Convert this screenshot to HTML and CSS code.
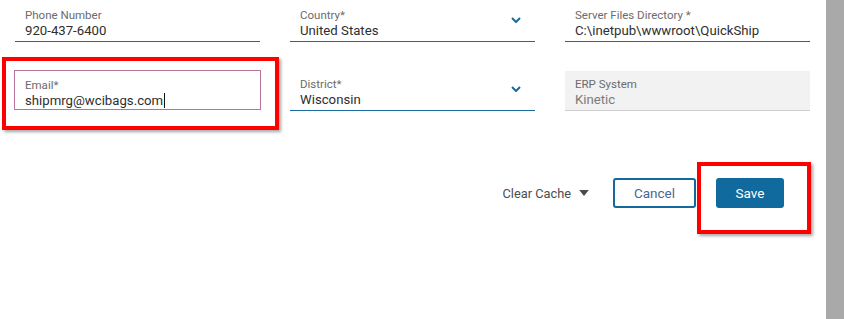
FILE: index.html
```html
<!DOCTYPE html>
<html lang="en">
  <head>
    <meta charset="UTF-8" />
    <meta name="viewport" content="width=device-width, initial-scale=1.0" />
    <title>Company Settings</title>
    <link rel="stylesheet" href="styles.css">
  </head>
  <body>
    <main class="panel">
      <div class="form-grid">
        <div class="field">
          <span class="field-label">Phone Number</span>
          <span class="field-value">920-437-6400</span>
        </div>

        <div class="field select">
          <span class="field-label">Country*</span>
          <span class="field-value">United States</span>
          <svg class="chevron" viewBox="0 0 10 6">
            <polyline points="1 1 5 5 9 1"></polyline>
          </svg>
        </div>

        <div class="field">
          <span class="field-label">Server Files Directory *</span>
          <span class="field-value">C:\inetpub\wwwroot\QuickShip</span>
        </div>

        <div class="field focused">
          <span class="field-label">Email*</span>
          <span class="field-value">shipmrg@wcibags.com<span class="caret"></span></span>
        </div>

        <div class="field select">
          <span class="field-label">District*</span>
          <span class="field-value">Wisconsin</span>
          <svg class="chevron" viewBox="0 0 10 6">
            <polyline points="1 1 5 5 9 1"></polyline>
          </svg>
        </div>

        <div class="field readonly">
          <span class="field-label">ERP System</span>
          <span class="field-value">Kinetic</span>
        </div>
      </div>

      <div class="actions">
        <button class="btn-link" type="button">
          Clear Cache
          <svg class="caret-down" viewBox="0 0 8 5">
            <polygon points="0 0 8 0 4 5"></polygon>
          </svg>
        </button>
        <button class="btn btn-outline" type="button">Cancel</button>
        <button class="btn btn-primary" type="button">Save</button>
      </div>

      <!-- annotation boxes drawn over the screenshot -->
      <div class="highlight highlight-email"></div>
      <div class="highlight highlight-save"></div>
    </main>

    <aside class="scrollbar"></aside>
  </body>
</html>
```

FILE: styles.css
```css
/* Page frame */
body {
  margin: 0;
  display: flex;
  height: 100vh;
  overflow: hidden;
  background: #ffffff;
  font-family: "Roboto", "Liberation Sans", sans-serif;
  color: #333333;
}

.panel {
  flex: 1;
  position: relative;
  padding: 2px 0 0 15px;
}

.scrollbar {
  width: 18px;
  background: #a9a9a9;
}

/* --- Form fields --- */

.form-grid {
  display: grid;
  grid-template-columns: repeat(3, 245px);
  column-gap: 30px;
  row-gap: 29px;
}

.field {
  --accent: #1a6b9b;
  position: relative;
  box-sizing: border-box;
  height: 40px;
  padding: 6px 10px 0;
  border-bottom: 1px solid var(--accent);
  display: flex;
  flex-direction: column;
}

.field-label {
  font-size: 11.5px;
  line-height: 15px;
  color: #6b6b6b;
}

.field-value {
  font-size: 13.2px;
  line-height: 16px;
  color: #2e2e2e;
  white-space: nowrap;
}

/* Focused email input */
.field.focused {
  margin: -1px -1px 0;
  height: 40px;
  border: 1px solid #b8739d;
  padding: 7px 10px 0;
}

.caret {
  display: inline-block;
  width: 1px;
  height: 15px;
  margin-left: 1px;
  vertical-align: -3px;
  background: #111111;
}

/* Select fields */
.field.select .chevron {
  position: absolute;
  right: 14px;
  top: 15px;
  width: 10px;
  height: 6px;
  fill: none;
  stroke: var(--accent);
  stroke-width: 2px;
}

/* Read only field */
.field.readonly {
  background: #f2f2f2;
  border-bottom-color: #cfcfcf;
}

.field.readonly .field-value {
  color: #7a7a7a;
}

/* --- Buttons row --- */

.actions {
  display: flex;
  justify-content: flex-end;
  align-items: center;
  gap: 20px;
  width: 769px;
  margin-top: 67px;
}

.btn-link {
  display: flex;
  align-items: center;
  gap: 8px;
  margin-right: 4px;
  padding: 0;
  border: none;
  background: none;
  font: inherit;
  font-size: 12.8px;
  color: #4d4d4d;
}

.caret-down {
  width: 10px;
  height: 6px;
  fill: #4a4a4a;
}

.btn {
  box-sizing: border-box;
  height: 30px;
  border-radius: 3px;
  font: inherit;
  font-size: 13.5px;
}

.btn-outline {
  width: 83px;
  border: 2px solid #13699c;
  background: #ffffff;
  color: #4a6890;
}

.btn-primary {
  width: 68px;
  border: none;
  background: #116a9d;
  color: #ffffff;
}

/* --- Red annotation boxes --- */

.highlight {
  position: absolute;
  box-sizing: border-box;
  border: 4px solid #ff0000;
  box-shadow: 2px 2px 3px rgba(0, 0, 0, 0.35);
}

.highlight-email {
  left: 2px;
  top: 57px;
  width: 277px;
  height: 73px;
}

.highlight-save {
  left: 697px;
  top: 162px;
  width: 114px;
  height: 72px;
}
```
